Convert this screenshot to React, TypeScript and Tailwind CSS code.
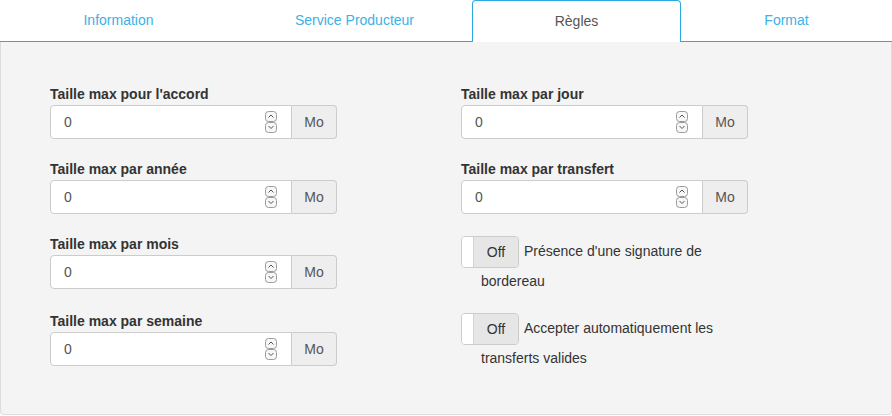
import React from 'react';

const tabs = [
  { label: 'Information', w: 'w-[237px]' },
  { label: 'Service Producteur', w: 'w-[235px]' },
  { label: 'Règles', w: 'w-[209px]', active: true },
  { label: 'Format', w: 'w-[211px]' },
];

function Spinner() {
  return (
    <svg width="12" height="22" viewBox="0 0 12 22" className="shrink-0">
      <rect x="0.5" y="0.5" width="11" height="10" rx="3" fill="#f7f7f7" stroke="#9a9a9a" />
      <path d="M3.5 6.5 L6 4 L8.5 6.5" fill="none" stroke="#555" strokeWidth="1" />
      <rect x="0.5" y="11.5" width="11" height="10" rx="3" fill="#f7f7f7" stroke="#9a9a9a" />
      <path d="M3.5 15 L6 17.5 L8.5 15" fill="none" stroke="#555" strokeWidth="1" />
    </svg>
  );
}

function SizeField({ label }: { label: string }) {
  return (
    <div className="flex flex-col">
      <label className="text-[14px] font-bold text-[#333] leading-[20px] mb-[1px]">{label}</label>
      <div className="flex w-[287px] h-[34px]">
        <div className="flex flex-1 items-center bg-white border border-[#ccc] rounded-l-[4px] pl-[13px] pr-[14px]">
          <span className="flex-1 text-[14px] text-[#555]">0</span>
          <Spinner />
        </div>
        <div className="w-[45px] flex items-center justify-center bg-[#eee] border border-l-0 border-[#ccc] rounded-r-[4px] text-[14px] text-[#555]">
          Mo
        </div>
      </div>
    </div>
  );
}

function Toggle({ text }: { text: string }) {
  return (
    <div className="w-[287px] pl-5 text-[14px] leading-[26px] text-[#333]">
      <span className="-ml-5 mr-[5px] inline-flex align-middle h-[32px] w-[58px] border border-[#ccc] rounded-[4px] overflow-hidden">
        <span className="w-[11px] bg-white" />
        <span className="flex-1 flex items-center justify-center bg-[#e6e6e6] border-l border-[#d4d4d4] text-[14px] text-[#333]">
          Off
        </span>
      </span>
      {text}
    </div>
  );
}

export default function App() {
  return (
    <div className="w-[892px] h-[416px] bg-white font-['Liberation_Sans',Arial,sans-serif]">
      <div className="flex h-[42px] border-b border-[#29abe2]">
        {tabs.map((t) =>
          t.active ? (
            <div
              key={t.label}
              className={`${t.w} -mb-px flex items-center justify-center bg-white border border-b-0 border-[#29abe2] rounded-t-[4px] text-[14px] text-[#555]`}
            >
              {t.label}
            </div>
          ) : (
            <div
              key={t.label}
              className={`${t.w} flex items-center justify-center text-[14px] text-[#3bb1e6]`}
            >
              {t.label}
            </div>
          )
        )}
      </div>
      <div className="h-[373px] bg-[#f4f4f4] border border-t-0 border-[#ddd] rounded-b-[4px] flex gap-[124px] pl-[49px] pt-[42px]">
        <div className="flex flex-col gap-[20px]">
          <SizeField label="Taille max pour l'accord" />
          <SizeField label="Taille max par année" />
          <SizeField label="Taille max par mois" />
          <div className="pt-[2px]">
            <SizeField label="Taille max par semaine" />
          </div>
        </div>
        <div className="flex flex-col">
          <SizeField label="Taille max par jour" />
          <div className="mt-[20px]">
            <SizeField label="Taille max par transfert" />
          </div>
          <div className="mt-[22px]">
            <Toggle text="Présence d'une signature de bordereau" />
          </div>
          <div className="mt-[19px]">
            <Toggle text="Accepter automatiquement les transferts valides" />
          </div>
        </div>
      </div>
    </div>
  );
}
